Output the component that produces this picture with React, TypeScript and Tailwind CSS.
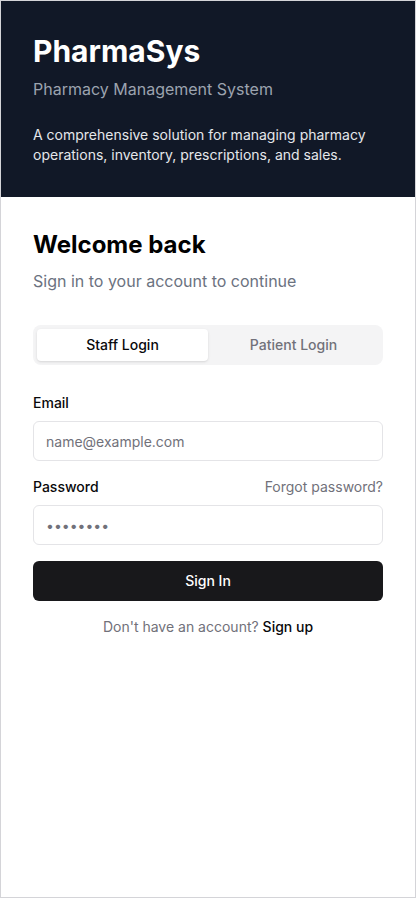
import { useState } from "react"

export default function App() {
  const [mode, setMode] = useState<"staff" | "patient">("staff")

  return (
    <div
      className="min-h-screen w-full flex flex-col border border-[#d4d4d8] bg-white"
      style={{ fontFamily: "Inter, 'Noto Sans', sans-serif" }}
    >
      {/* Шапка */}
      <header className="bg-[#111827] px-8 pt-8 pb-8">
        <h1 className="text-[30px] leading-9 font-bold text-white">PharmaSys</h1>
        <p className="mt-2 text-base leading-6 text-[#9ca3af]">Pharmacy Management System</p>
        <p className="mt-6 text-sm leading-5 text-[#e5e7eb]">
          A comprehensive solution for managing pharmacy operations, inventory, prescriptions, and sales.
        </p>
      </header>

      <main className="px-8 pt-8">
        <h2 className="text-2xl leading-8 font-bold text-black">Welcome back</h2>
        <p className="mt-2 text-base leading-6 text-[#6b7280]">Sign in to your account to continue</p>

        <nav className="mt-8 grid grid-cols-2 rounded-lg bg-[#f4f4f5] p-1">
          <button
            className={
              mode === "staff"
                ? "h-8 rounded-sm bg-white text-sm font-medium text-[#09090b] shadow-sm"
                : "h-8 rounded-sm text-sm font-medium text-[#71717a]"
            }
            onClick={() => setMode("staff")}
          >
            Staff Login
          </button>
          <button
            className={
              mode === "patient"
                ? "h-8 rounded-sm bg-white text-sm font-medium text-[#09090b] shadow-sm"
                : "h-8 rounded-sm text-sm font-medium text-[#71717a]"
            }
            onClick={() => setMode("patient")}
          >
            Patient Login
          </button>
        </nav>

        <form className="mt-7 flex flex-col" onSubmit={(e) => e.preventDefault()}>
          <label className="text-sm leading-5 font-medium text-[#09090b]">Email</label>
          <input
            type="email"
            placeholder="name@example.com"
            className="mt-2 h-10 w-full rounded-md border border-[#e4e4e7] bg-white px-3 text-sm text-[#09090b] placeholder:text-[#71717a] outline-none"
          />

          <div className="mt-4 flex items-center justify-between">
            <label className="text-sm leading-5 font-medium text-[#09090b]">Password</label>
            <a className="text-sm leading-5 text-[#71717a]">Forgot password?</a>
          </div>
          <input
            type="password"
            defaultValue="password"
            className="mt-2 h-10 w-full rounded-md border border-[#e4e4e7] bg-white px-3 text-sm text-[#71717a] outline-none"
          />

          <button
            type="submit"
            className="mt-4 h-10 w-full rounded-md bg-[#18181b] text-sm font-medium text-white"
          >
            Sign In
          </button>
        </form>

        <p className="mt-4 text-center text-sm leading-5 text-[#71717a]">
          Don't have an account? <span className="font-medium text-[#09090b]">Sign up</span>
        </p>
      </main>
    </div>
  )
}
